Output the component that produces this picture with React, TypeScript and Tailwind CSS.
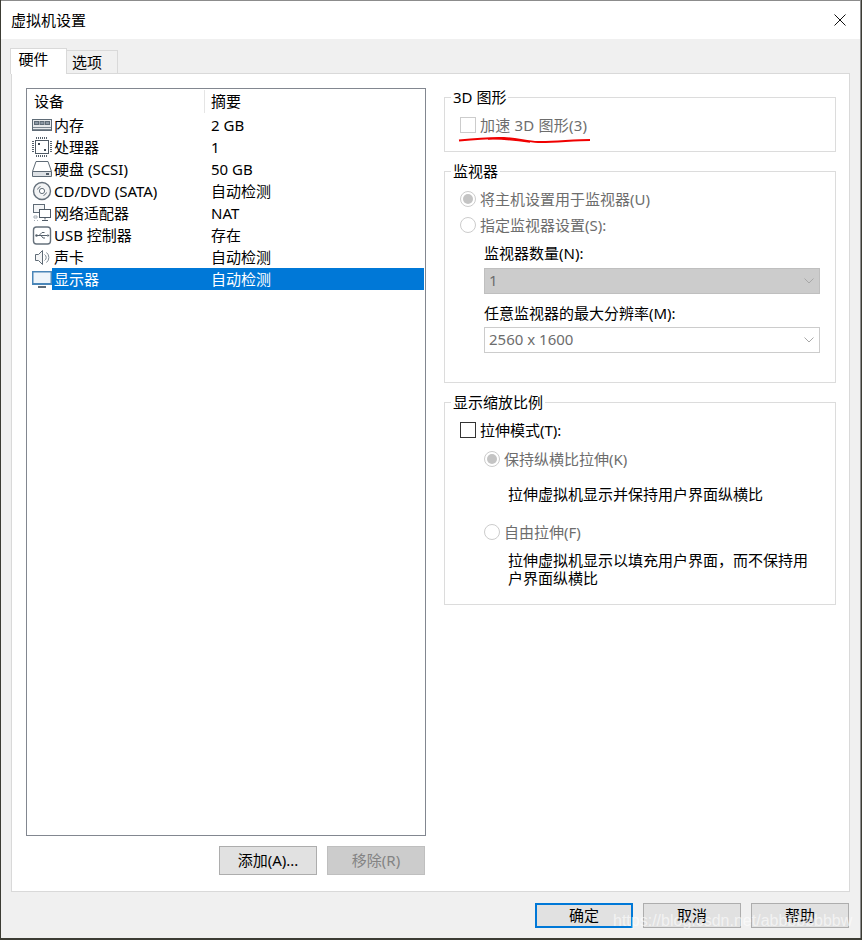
import type { ReactNode } from "react"

const fontFamily = "font-['Noto_Sans','Noto_Sans_CJK_SC',sans-serif]"

function MemoryIcon() {
  return (
    <svg width="20" height="22" viewBox="0 0 20 22" fill="none">
      <rect x="0.5" y="5.5" width="19" height="11" fill="#e8eaec" stroke="#5f6b76" />
      <rect x="2.5" y="7.5" width="4" height="3" fill="#8b97a3" stroke="#5f6b76" />
      <rect x="8" y="7.5" width="4" height="3" fill="#8b97a3" stroke="#5f6b76" />
      <rect x="13.5" y="7.5" width="4" height="3" fill="#8b97a3" stroke="#5f6b76" />
      <path d="M1 13.5h18M1 15.5h18" stroke="#7d8892" />
    </svg>
  )
}

function CpuIcon() {
  return (
    <svg width="20" height="22" viewBox="0 0 20 22" fill="none">
      <rect x="3.5" y="4.5" width="13" height="13" fill="#fff" stroke="#4f5a65" />
      <path
        d="M4.500 1v2M6.500 1v2M8.500 1v2M10.500 1v2M12.500 1v2M14.500 1v2M4.500 19v2M6.500 19v2M8.500 19v2M10.500 19v2M12.500 19v2M14.500 19v2M0 5.500h2M0 7.500h2M0 9.500h2M0 11.500h2M0 13.500h2M0 15.500h2M18 5.500h2M18 7.500h2M18 9.500h2M18 11.500h2M18 13.500h2M18 15.500h2"
        stroke="#56616c"
      />
      <rect x="6" y="7" width="2" height="2" fill="#3f4a55" />
      <rect x="12" y="13" width="2" height="2" fill="#3f4a55" />
    </svg>
  )
}

function DiskIcon() {
  return (
    <svg width="20" height="22" viewBox="0 0 20 22" fill="none">
      <path d="M4 3.500h12l3.500 10v5H0.500v-5z" fill="#fff" stroke="#5f6b76" />
      <path d="M0.500 13.500h19" stroke="#5f6b76" />
      <rect x="1" y="14" width="18" height="4" fill="#dde1e5" />
      <rect x="14" y="15" width="3" height="2" fill="#4f5a65" />
    </svg>
  )
}

function CdIcon() {
  return (
    <svg width="20" height="22" viewBox="0 0 20 22" fill="none">
      <circle cx="10" cy="11" r="8.500" fill="#f2f3f4" stroke="#65707b" strokeWidth="1.400" />
      <circle cx="10" cy="11" r="2.600" fill="#fff" stroke="#65707b" />
      <path d="M5.500 9.500a5 5 0 0 1 3-3M14.500 12.500a5 5 0 0 1-3 3" stroke="#65707b" />
    </svg>
  )
}

function NetworkIcon() {
  return (
    <svg width="20" height="22" viewBox="0 0 20 22" fill="none">
      <rect x="1.500" y="2.500" width="11" height="8" fill="#f4f5f6" stroke="#5f6b76" />
      <rect x="7.500" y="7.500" width="11" height="8" fill="#fff" stroke="#4f5a65" />
      <path d="M13 15.500v2M10 18.500h6" stroke="#4f5a65" />
      <path d="M2 14h3v2H2zM2 18.500h1M5 18.500h1" stroke="#a5adb5" />
    </svg>
  )
}

function UsbIcon() {
  return (
    <svg width="20" height="22" viewBox="0 0 20 22" fill="none">
      <rect x="1.500" y="3" width="17" height="17" rx="3" fill="#fff" stroke="#66717c" strokeWidth="1.400" />
      <path d="M4.500 11.500h11M7 11.500l3-3h2.500M9 11.500l2 2.500h2" stroke="#56616c" />
      <path d="M15.500 10v3l2-1.500z" fill="#56616c" />
      <circle cx="4.500" cy="11.500" r="1.200" fill="#56616c" />
    </svg>
  )
}

function SoundIcon() {
  return (
    <svg width="20" height="22" viewBox="0 0 20 22" fill="none">
      <path d="M3.500 8.500h3l4-4v14l-4-4h-3z" fill="#f4f5f6" stroke="#5f6b76" />
      <path d="M12.500 8.500a3.500 3.500 0 0 1 0 6M14.500 6.500a6.500 6.500 0 0 1 0 10" stroke="#7d8892" />
    </svg>
  )
}

function DisplayIcon() {
  return (
    <svg width="20" height="22" viewBox="0 0 20 22" fill="none">
      <rect x="0.750" y="3.750" width="18.500" height="12.500" fill="#eef5fb" stroke="#4a86b8" strokeWidth="1.500" />
      <rect x="0" y="15" width="20" height="2" fill="#4a86b8" />
      <rect x="6" y="18" width="8" height="2" fill="#5f6b76" />
    </svg>
  )
}

const devices = [
  { name: "内存", summary: "2 GB", icon: <MemoryIcon /> },
  { name: "处理器", summary: "1", icon: <CpuIcon /> },
  { name: "硬盘 (SCSI)", summary: "50 GB", icon: <DiskIcon /> },
  { name: "CD/DVD (SATA)", summary: "自动检测", icon: <CdIcon /> },
  { name: "网络适配器", summary: "NAT", icon: <NetworkIcon /> },
  { name: "USB 控制器", summary: "存在", icon: <UsbIcon /> },
  { name: "声卡", summary: "自动检测", icon: <SoundIcon /> },
  { name: "显示器", summary: "自动检测", icon: <DisplayIcon />, selected: true },
]

function Group({ title, height, inner, children }: { title: string; height: string; inner: string; children: ReactNode }) {
  return (
    <fieldset className={`border border-[#dcdcdc] ${height}`}>
      <legend className="ml-[6px] px-[2px] text-[15px] leading-[20px] text-black">{title}</legend>
      <div className={inner}>{children}</div>
    </fieldset>
  )
}

function Radio({ checked }: { checked?: boolean }) {
  return (
    <span className="flex h-4 w-4 shrink-0 items-center justify-center rounded-full border border-[#cccccc] bg-white">
      {checked && <span className="h-[10px] w-[10px] rounded-full bg-[#c4c4c4]" />}
    </span>
  )
}

function RadioRow({ label, checked, className }: { label: string; checked?: boolean; className?: string }) {
  return (
    <div className={`flex h-[22px] items-center gap-1 text-[15px] text-[#6d6d6d] ${className ?? ""}`}>
      <Radio checked={checked} />
      <span>{label}</span>
    </div>
  )
}

function Chevron() {
  return (
    <svg width="10" height="6" viewBox="0 0 10 6" fill="none">
      <path d="M0.500 0.500L5 5l4.500-4.500" stroke="#a8a8a8" />
    </svg>
  )
}

function Select({ value, disabled }: { value: string; disabled?: boolean }) {
  return (
    <div
      className={
        disabled
          ? "flex h-[26px] items-center justify-between border border-[#bfbfbf] bg-[#cccccc] pb-px pl-1 pr-[5px] text-[15px] text-[#6d6d6d]"
          : "flex h-[26px] items-center justify-between border border-[#cccccc] bg-white pb-px pl-1 pr-[5px] text-[15px] text-[#6d6d6d]"
      }
    >
      <span>{value}</span>
      <Chevron />
    </div>
  )
}

function Button({ label, variant }: { label: string; variant?: "default" | "disabled" }) {
  let tone = "border border-[#adadad] bg-[#e1e1e1] text-black"
  if (variant === "default") tone = "border-2 border-[#0078d7] bg-[#e1e1e1] text-black"
  if (variant === "disabled") tone = "border border-[#bfbfbf] bg-[#cccccc] text-[#838383]"
  return <div className={`flex w-[98px] items-center justify-center text-[15px] ${tone}`}>{label}</div>
}

export default function App() {
  return (
    <div className={`relative flex h-[940px] w-[862px] bg-[#3c3c34] pb-[2px] pl-[1px] ${fontFamily}`}>
      <div className="flex w-[860px] flex-col border-r border-t border-[#8c8c8c] bg-[#f0f0f0]">
        <div className="flex h-[38px] shrink-0 items-center justify-between bg-white pl-[10px] pr-[14px] text-[15px] text-black">
          <span>虚拟机设置</span>
          <svg width="12" height="12" viewBox="0 0 12 12" fill="none">
            <path d="M0.500 0.500l11 11M11.500 0.500l-11 11" stroke="#111" />
          </svg>
        </div>

        <div className="flex flex-1 flex-col px-[10px] pt-[9px]">
          <div className="-ml-px flex h-[25px] items-end text-[15px] text-black">
            <div className="relative z-10 -mb-px flex h-[26px] w-[57px] items-center justify-center border border-b-0 border-[#d9d9d9] bg-white pb-1 pr-[10px]">
              硬件
            </div>
            <div className="flex h-[23px] w-[51px] items-center justify-center border border-b-0 border-l-0 border-[#d9d9d9] bg-[#f0f0f0] pr-[10px]">
              选项
            </div>
          </div>

          <div className="flex h-[819px] border border-[#d9d9d9] bg-white pl-[14px] pr-[13px] pt-[13px]">
            <div className="mt-px flex w-[400px] flex-col">
              <div className="flex h-[748px] flex-col border border-[#828790] bg-white text-[15px] text-black">
                <div className="flex h-[25px] shrink-0 items-center">
                  <span className="w-[177px] pl-[7px]">设备</span>
                  <span className="h-[23px] w-px bg-[#e5e5e5]" />
                  <span className="pl-[6px]">摘要</span>
                </div>
                {devices.map((d) => (
                  <div key={d.name} className="flex h-[22px] shrink-0 items-center pl-[5px] pr-px">
                    <span className="flex h-[22px] w-5 shrink-0 items-center justify-center">{d.icon}</span>
                    <div className={d.selected ? "flex h-[22px] flex-1 items-center bg-[#0078d7] text-white" : "flex h-[22px] flex-1 items-center"}>
                      <span className="w-[159px] whitespace-nowrap pl-[2px]">{d.name}</span>
                      <span>{d.summary}</span>
                    </div>
                  </div>
                ))}
              </div>
              <div className="mt-[10px] flex h-[29px] justify-end gap-[10px] pr-px">
                <Button label="添加(A)..." />
                <Button label="移除(R)" variant="disabled" />
              </div>
            </div>

            <div className="ml-[18px] flex w-[392px] flex-col gap-[9px]">
              <Group title="3D 图形" height="h-[65px]" inner="pl-[15px] pt-[7px]">
                <div className="flex h-[22px] items-center gap-1 text-[15px] text-[#6d6d6d]">
                  <span className="h-4 w-4 border border-[#cccccc] bg-white" />
                  <span className="tracking-[0.2px]">加速 3D 图形(3)</span>
                </div>
              </Group>

              <Group title="监视器" height="h-[222px]" inner="px-[15px] pt-[7px]">
                <RadioRow label="将主机设置用于监视器(U)" checked />
                <RadioRow label="指定监视器设置(S):" className="mt-1" />
                <div className="ml-6 mt-[6px] flex flex-col text-[15px] text-black">
                  <span className="leading-[22px]">监视器数量(N):</span>
                  <div className="mt-1">
                    <Select value="1" disabled />
                  </div>
                  <span className="mt-2 leading-[22px]">任意监视器的最大分辨率(M):</span>
                  <div className="mt-[3px]">
                    <Select value="2560 x 1600" />
                  </div>
                </div>
              </Group>

              <Group title="显示缩放比例" height="h-[213px]" inner="px-[15px] pt-[7px]">
                <div className="flex h-[22px] items-center gap-1 text-[15px] text-black">
                  <span className="h-4 w-4 border border-[#333333] bg-white" />
                  <span>拉伸模式(T):</span>
                </div>
                <RadioRow label="保持纵横比拉伸(K)" checked className="ml-6 mt-[7px]" />
                <p className="ml-12 mt-[15px] text-[15px] leading-[18px] text-black">拉伸虚拟机显示并保持用户界面纵横比</p>
                <RadioRow label="自由拉伸(F)" className="ml-6 mt-[18px]" />
                <p className="ml-12 mt-[8px] w-[310px] text-[15px] leading-[18px] text-black">
                  拉伸虚拟机显示以填充用户界面，而不保持用户界面纵横比
                </p>
              </Group>
            </div>
          </div>

          <div className="mt-[11px] flex h-[25px] justify-end gap-[10px] pr-px">
            <Button label="确定" variant="default" />
            <Button label="取消" />
            <Button label="帮助" />
          </div>
        </div>
      </div>

      <svg className="absolute left-[458px] top-[135px]" width="133" height="10" viewBox="0 0 133 10" fill="none">
        <path d="M1 5.500C15 4 30 2.500 46 3c14 .5 22 3.500 34 4 14 .5 36-2 52-2" stroke="#f00000" strokeWidth="2" />
        <path d="M30 4c14-.5 28 1 42 3" stroke="#f00000" strokeWidth="1.400" />
      </svg>

      <span className="absolute left-[613px] top-[910px] whitespace-nowrap font-['Liberation_Sans',sans-serif] text-[16px] leading-[22px] text-white/60">
        https://blog.csdn.net/abbbbbbbbw
      </span>
    </div>
  )
}
